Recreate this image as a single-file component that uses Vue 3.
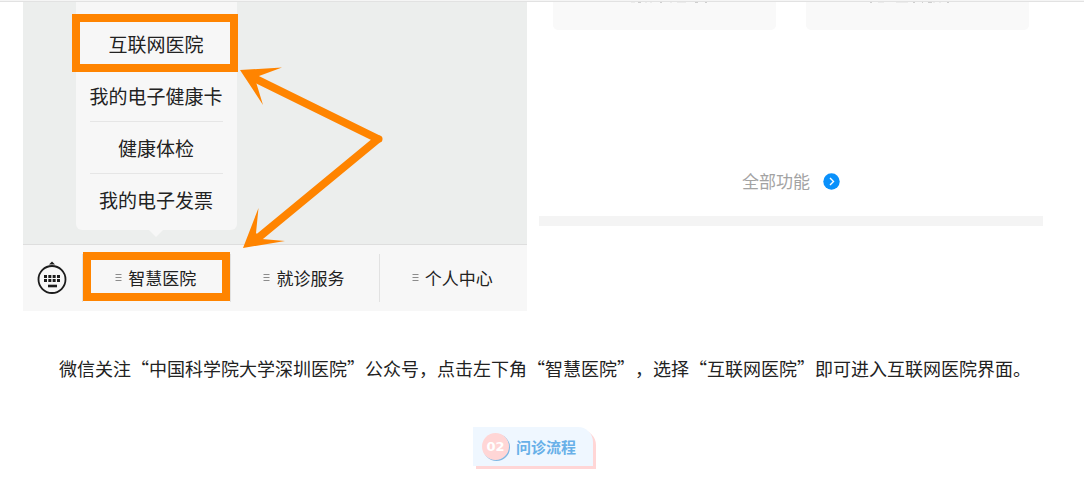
<script setup>
const services = ['互联网医院', '我的电子健康卡', '健康体检', '我的电子发票']
const tabs = ['智慧医院', '就诊服务', '个人中心']
</script>

<template>
  <main class="page">
    <div class="figures">
      <section class="chat">
        <div class="canvas">
          <ul class="popup">
            <li v-for="(item, i) in services" :key="item">
              <button type="button" class="service" :class="{ marked: i === 0 }">{{ item }}</button>
            </li>
          </ul>
          <svg class="arrows" width="160" height="190" viewBox="230 60 160 190" aria-hidden="true">
            <path d="M256 79 378 139 258 238" fill="none" stroke="#ff8400" stroke-width="8" stroke-linejoin="round" />
            <circle cx="379" cy="139" r="3.500" fill="#ff8400" />
            <path d="M240 70 282 67.500 259 76 256 82 263 105Z" fill="#ff8400" />
            <path d="M243 248 258.500 208 256 233 262 239 285 241Z" fill="#ff8400" />
          </svg>
        </div>
        <nav class="bar">
          <button type="button" class="keyboard" aria-label="键盘">
            <svg width="30" height="34" viewBox="0 0 30 34">
              <circle cx="15" cy="18.500" r="13.500" fill="none" stroke="#1c1c1c" stroke-width="1.800" />
              <path d="M12 3.500 15 0.500l3 3z" fill="#1c1c1c" />
              <path d="M7 15.500H23M7 19.500H23" stroke="#1c1c1c" stroke-width="2.800" stroke-dasharray="3 1.330" />
              <path d="M11 25h9" stroke="#1c1c1c" stroke-width="2.600" />
            </svg>
          </button>
          <button v-for="(tab, i) in tabs" :key="tab" type="button" class="tab">
            <span class="tab-label" :class="{ marked: i === 0 }">
              <svg width="7" height="9" viewBox="0 0 7 9"><path d="M0.500 1.500h6M0.500 4.500h6M0.500 7.500h6" stroke="#8c8c8c" /></svg>
              {{ tab }}
            </span>
          </button>
        </nav>
      </section>

      <section class="portal">
        <div class="cards">
          <div class="card">
            <svg width="222" height="2" viewBox="0 0 222 2" aria-hidden="true">
              <path d="M78 .5h4M92 .5h2M97 .5h2M117 .5h2M124 .5h9" stroke="#ececec" />
              <path d="M85 .5h3M107 .5h2M142 .5h3M152 .5h2" stroke="#cfcfcf" />
            </svg>
          </div>
          <div class="card">
            <svg width="222" height="2" viewBox="0 0 222 2" aria-hidden="true">
              <path d="M72 .5h6M90 .5h12M127 .5h2M133 .5h2" stroke="#ececec" />
              <path d="M64 .5h2M107 .5h2M116 .5h1M122 .5h4M141 .5h2" stroke="#cfcfcf" />
            </svg>
          </div>
        </div>
        <a class="all" href="#">
          <span>全部功能</span>
          <svg width="17" height="17" viewBox="0 0 17 17">
            <circle cx="8.500" cy="8.500" r="8.200" fill="#0a91fb" />
            <path d="M7 5l3.500 3.500L7 12" fill="none" stroke="#fff" stroke-width="1.400" />
          </svg>
        </a>
        <div class="band"></div>
      </section>
    </div>

    <p class="note">微信关注“中国科学院大学深圳医院”公众号，点击左下角“智慧医院”，选择“互联网医院”即可进入互联网医院界面。</p>

    <div class="step-row">
      <h2 class="step"><span class="number">02</span>问诊流程</h2>
    </div>
  </main>
</template>

<style>
body {
  margin: 0;
  background: #fff;
}
</style>

<style scoped>
.page {
  padding-bottom: 30px;
  border-top: 1px solid #f5f5f5;
  font-family: "Noto Sans CJK SC", sans-serif;
  color: #222;
}
.page::before {
  content: "";
  display: block;
  height: 1px;
  background: #e2e2e2;
}
button {
  margin: 0;
  padding: 0;
  border: 0;
  background: none;
  font: inherit;
  color: inherit;
}
.figures {
  display: grid;
  grid-template-columns: 1fr 1fr;
  gap: 12px;
  padding: 0 41px 0 23px;
}
.chat {
  background: #eceeed;
}
.canvas {
  position: relative;
  height: 242px;
}
.popup {
  position: relative;
  width: 161px;
  margin: 0 0 0 53px;
  padding: 16px 0 4px;
  box-sizing: border-box;
  list-style: none;
  background: #f7f7f7;
  border-radius: 0 0 6px 6px;
}
.popup::after {
  content: "";
  position: absolute;
  top: 100%;
  left: 73px;
  border: 7px solid transparent;
  border-top-color: #f7f7f7;
  border-bottom: 0;
}
.popup li {
  height: 52px;
  margin: 0 14px;
  box-sizing: border-box;
  border-bottom: 1px solid #e6e6e6;
}
.popup li:last-child {
  border-bottom: 0;
}
.service {
  position: relative;
  display: flex;
  align-items: center;
  justify-content: center;
  width: 100%;
  height: 52px;
  padding-right: 1px;
  font-size: 19px;
  line-height: 28px;
  white-space: nowrap;
}
.marked::after {
  content: "";
  position: absolute;
  border: 8px solid #ff8400;
}
.service.marked::after {
  inset: -4px -15px -2px -18px;
}
.arrows {
  position: absolute;
  top: 58px;
  left: 207px;
}
.bar {
  display: flex;
  align-items: center;
  height: 66px;
  background: #f7f7f7;
  border-top: 1px solid #dedede;
}
.keyboard {
  width: 59px;
  height: 34px;
}
.keyboard svg {
  display: block;
  margin: 0 14px;
}
.tab {
  flex: 1;
  height: 48px;
  border-left: 1px solid #e2e2e2;
  font-size: 17px;
}
.tab-label {
  position: relative;
  display: flex;
  align-items: center;
  justify-content: center;
  gap: 6px;
  height: 48px;
  padding: 0 2px 2px 0;
  box-sizing: border-box;
}
.tab-label.marked::after {
  inset: -2px 0 1px;
}
.portal {
  display: flex;
  flex-direction: column;
}
.cards {
  display: grid;
  grid-template-columns: 1fr 1fr;
  gap: 30px;
  padding: 0 14px;
}
.card {
  height: 28px;
  background: #f9f9f9;
  border-radius: 0 0 5px 5px;
  overflow: hidden;
}
.card svg {
  display: block;
}
.all {
  display: flex;
  align-items: center;
  justify-content: center;
  gap: 13px;
  height: 24px;
  margin-top: 139px;
  color: #a3a3a3;
  font-size: 17px;
  line-height: 24px;
  text-decoration: none;
}
.band {
  height: 10px;
  margin-top: 23px;
  background: #f4f4f4;
}
.note {
  margin: 39px 23px 0;
  font-size: 18px;
  line-height: 36px;
  text-indent: 2em;
  text-spacing-trim: space-all;
}
.step-row {
  display: flex;
  justify-content: center;
  margin-top: 41px;
  padding: 0 41px 0 23px;
}
.step {
  display: flex;
  align-items: center;
  gap: 7px;
  height: 39px;
  margin: 0;
  padding: 0 17px 0 9px;
  box-sizing: border-box;
  border-radius: 0 15px 0 0;
  background: #eff7ff;
  box-shadow: 3px 3px 0 #ffd6d6;
  color: #68b0e8;
  font-size: 15px;
}
.number {
  width: 27px;
  height: 27px;
  border-radius: 50%;
  background: #ffd6d6;
  box-shadow: 1px 1px 0 #80b8e4;
  color: #fff;
  font-family: "DejaVu Sans", sans-serif;
  font-size: 13px;
  line-height: 27px;
  text-align: center;
}
</style>
